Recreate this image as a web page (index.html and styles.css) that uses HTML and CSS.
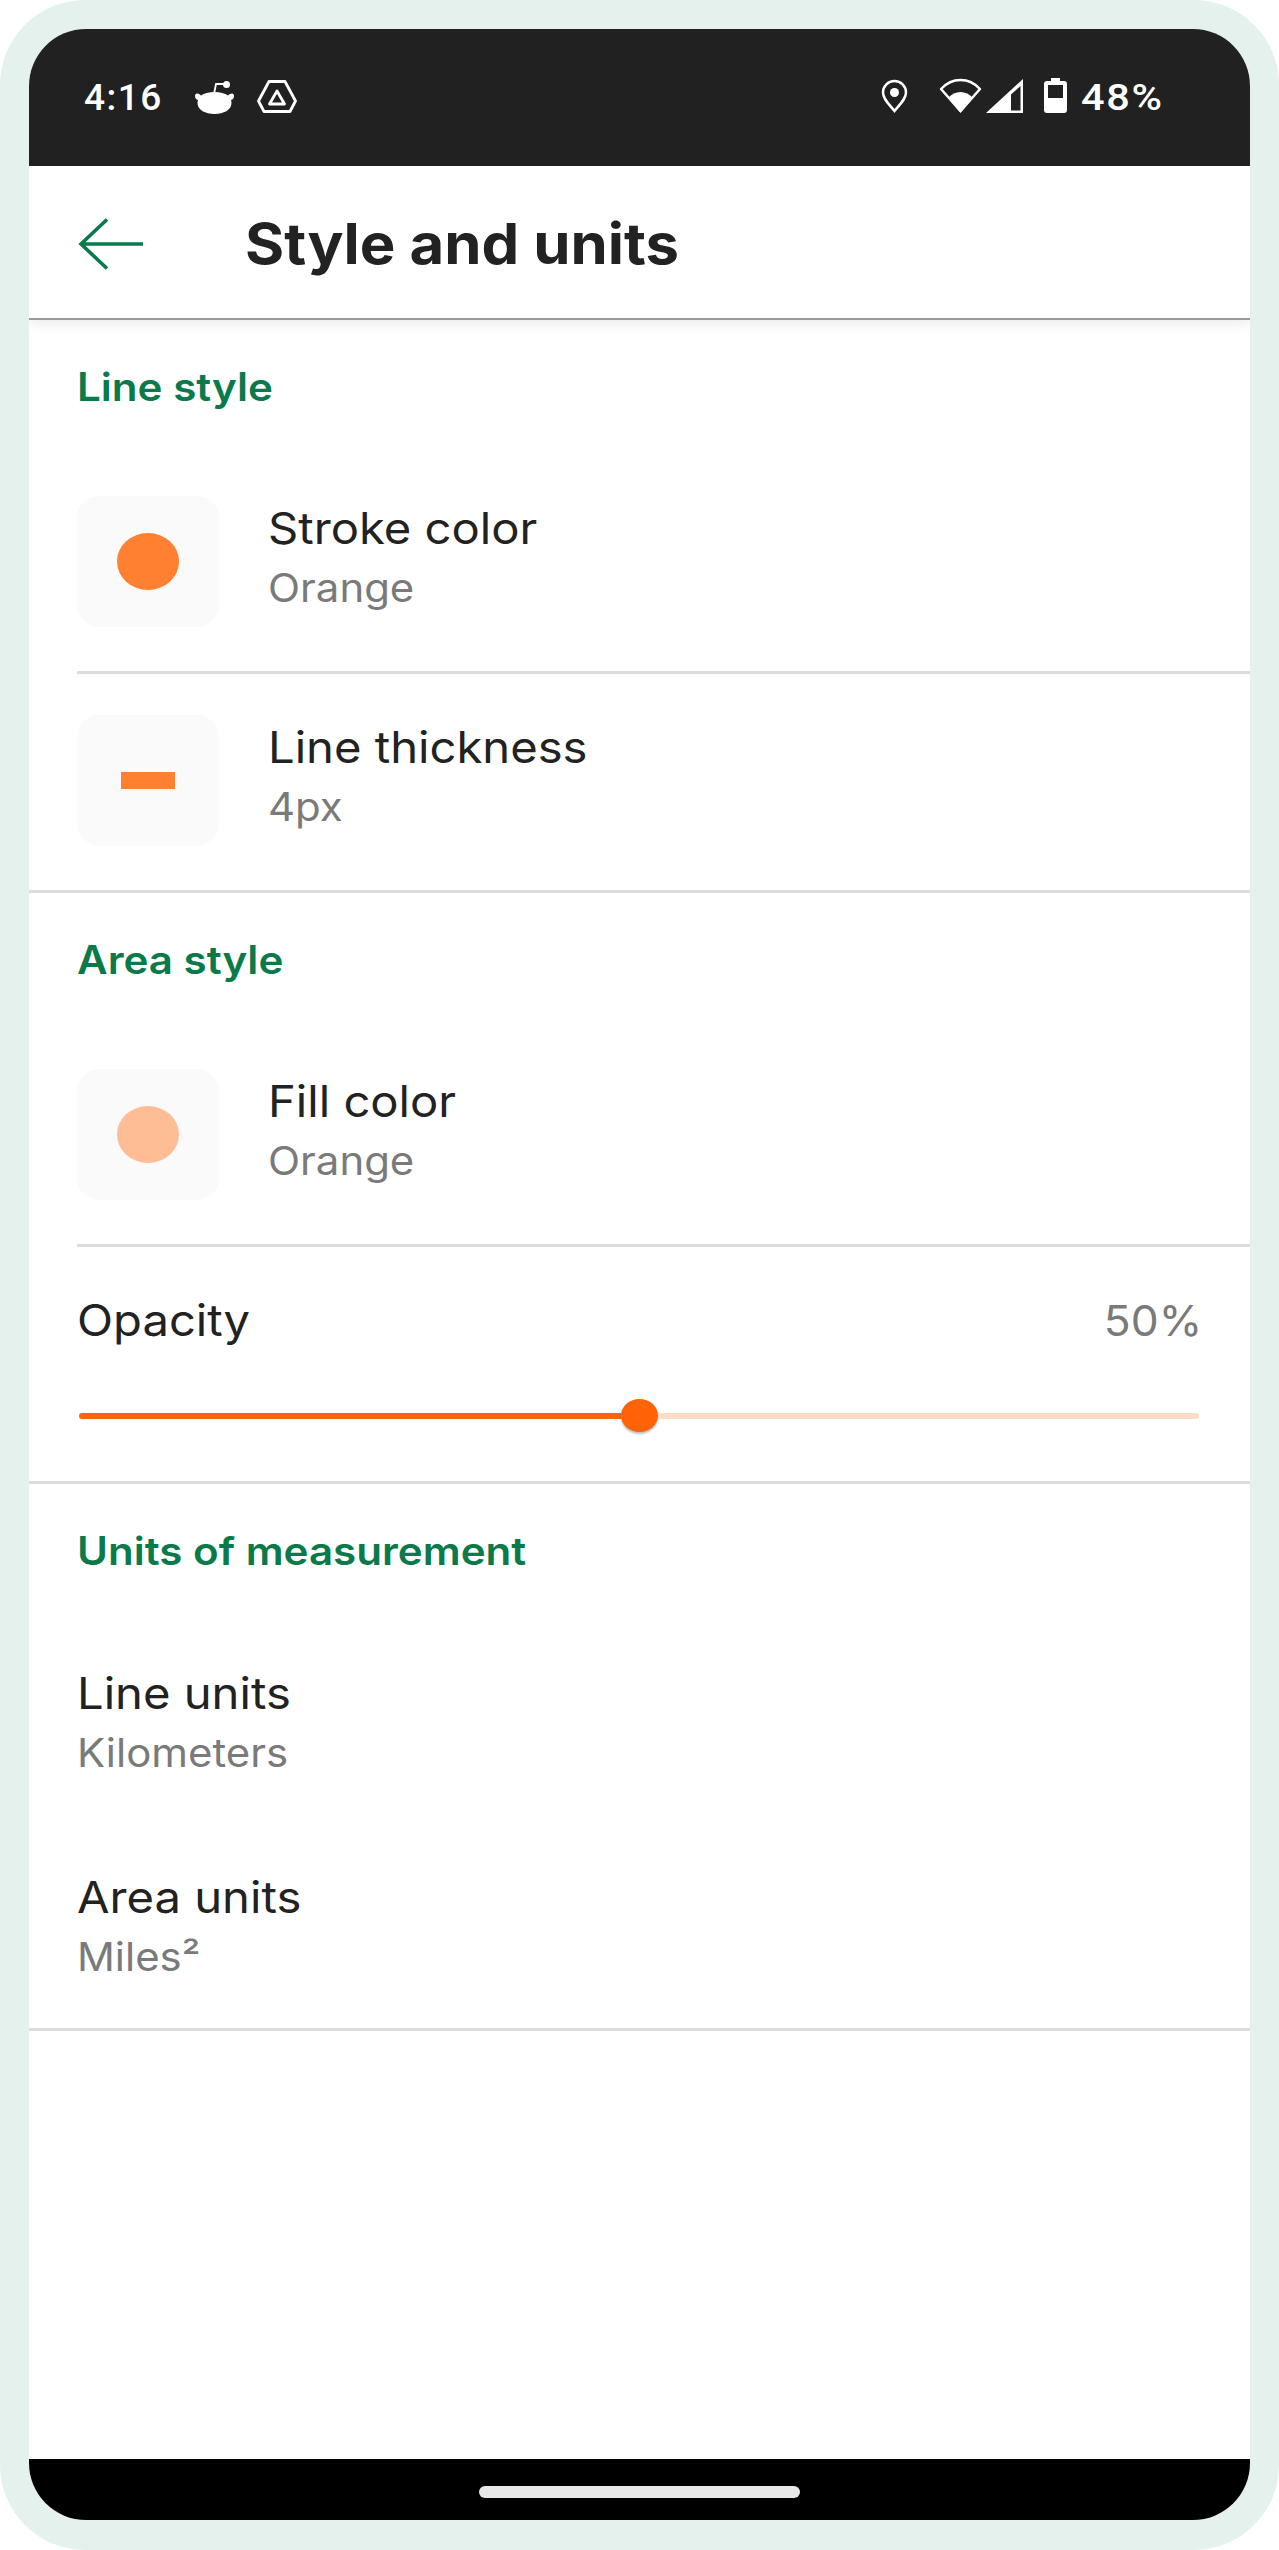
FILE: index.html
```html
<!DOCTYPE html>
<html lang="en">
<head>
<meta charset="utf-8">
<title>Style and units</title>
<link rel="stylesheet" href="styles.css">
</head>
<body>
<div class="frame">
  <div class="screen">
    <div class="status">
      <div class="status-left">
        <span class="clock">4:16</span>
        <svg class="ic-reddit" viewBox="0 0 39 33" width="39" height="33"><path d="M2 12.500c1.500 0 3 .8 4 2C9 12.500 14 11 19.500 11s10.500 1.500 13.500 3.500c1-1.200 2.500-2 4-2 1.200 0 2 1 2 2.500 0 2-1 3.500-3 4 .3 1 .5 2 .5 3C36.500 29 28.500 33 19.500 33S2.500 29 2.500 22c0-1 .2-2 .5-3-2-.5-3-2-3-4 0-1.500.8-2.500 2-2.500z" fill="#fff"/><circle cx="31.500" cy="3.500" r="3.500" fill="#fff"/><path d="M19 13l2-10h9" fill="none" stroke="#fff" stroke-width="1.800"/></svg>
        <svg class="ic-hex" viewBox="0 0 40 33" width="40" height="33"><path d="M12 1.500h16L38.500 21 33 31.500H7L1.500 21z" fill="none" stroke="#fff" stroke-width="2.800" stroke-linejoin="round"/><path d="M20 11L27.500 24H12.500z" fill="none" stroke="#fff" stroke-width="2.800" stroke-linejoin="round"/></svg>
      </div>
      <div class="status-right">
        <svg class="ic-pin" viewBox="0 0 27 34" width="27" height="34"><path d="M13.500 32C8 25 2 20 2 13.500a11.500 11.500 0 0 1 23 0C25 20 19 25 13.500 32z" fill="none" stroke="#fff" stroke-width="2.500"/><circle cx="13.500" cy="13.500" r="4.500" fill="#fff"/></svg>
        <svg class="ic-wifi" viewBox="0 0 43 35" width="43" height="35"><path d="M21.500 33L2 11C13 -1 30 -1 41 11z" fill="none" stroke="#fff" stroke-width="2.500" stroke-linejoin="round"/><path d="M21.500 35L9 20C16 12 27 12 34 20z" fill="#fff"/></svg>
        <svg class="ic-signal" viewBox="0 0 37 34" width="37" height="34"><path d="M0 34L37 0V34z" fill="#fff"/><path d="M25 15.500L34.500 7V31.500H25z" fill="#212121"/></svg>
        <svg class="ic-batt" viewBox="0 0 23 35" width="23" height="35"><path d="M7 0h9v3h4a3 3 0 0 1 3 3v26a3 3 0 0 1-3 3H3a3 3 0 0 1-3-3V6a3 3 0 0 1 3-3h4z" fill="#fff"/><rect x="4" y="7" width="15" height="13" fill="#212121"/></svg>
        <span class="percent">48%</span>
      </div>
    </div>

    <header class="appbar">
      <svg class="ic-back" viewBox="0 0 66 52" width="66" height="52"><path d="M65 26H4M29 1.500L3 26l26 24.500" fill="none" stroke="#0b7a4b" stroke-width="3.600"/></svg>
      <h1 class="title">Style and units</h1>
    </header>

    <main class="content">
      <section class="group">
        <h2 class="heading">Line style</h2>
        <div class="row row-inset">
          <div class="swatch"><span class="dot dot-stroke"></span></div>
          <div class="labels"><div class="label">Stroke color</div><div class="sub">Orange</div></div>
        </div>
        <div class="row">
          <div class="swatch"><span class="bar"></span></div>
          <div class="labels"><div class="label">Line thickness</div><div class="sub">4px</div></div>
        </div>
      </section>

      <section class="group">
        <h2 class="heading">Area style</h2>
        <div class="row row-inset">
          <div class="swatch"><span class="dot dot-fill"></span></div>
          <div class="labels"><div class="label">Fill color</div><div class="sub">Orange</div></div>
        </div>
        <div class="opacity">
          <div class="opacity-head"><span class="label">Opacity</span><span class="value">50%</span></div>
          <div class="slider">
            <div class="slider-fill"></div>
            <div class="slider-thumb"></div>
            <div class="slider-rest"></div>
          </div>
        </div>
      </section>

      <section class="group">
        <h2 class="heading">Units of measurement</h2>
        <div class="plain-row"><div class="label">Line units</div><div class="sub">Kilometers</div></div>
        <div class="plain-row"><div class="label">Area units</div><div class="sub">Miles²</div></div>
      </section>
    </main>

    <footer class="navbar"><span class="pill"></span></footer>
  </div>
</div>
</body>
</html>
```
FILE: styles.css
```css
* { box-sizing: border-box; }
html, body { margin: 0; padding: 0; background: #fff; }
body { font-family: Inter, "Liberation Sans", sans-serif; color: #222; }
.frame { width: 1279px; height: 2550px; padding: 29px 29px 30px; background: #e4f1ec; border-radius: 85px; }
.screen { height: 2491px; display: flex; flex-direction: column; background: #fff; border-radius: 57px; overflow: hidden; }

.status { height: 137px; flex: none; background: #212121; display: flex; justify-content: space-between; padding: 49px 95px 0 55px; color: #fff; }
.status-left, .status-right { display: flex; align-items: flex-start; }
.clock, .percent { font-family: Roboto, sans-serif; font-weight: 500; font-size: 37px; line-height: 36px; letter-spacing: 1.5px; margin-top: 2px; }
.percent { margin-left: 14px; transform: scaleX(1.12); transform-origin: left center; }
.ic-reddit { margin: 3px 0 0 32px; }
.ic-hex { margin: 2px 0 0 23px; }
.ic-pin { margin-top: 1px; }
.ic-wifi { margin-left: 31px; }
.ic-signal { margin: 1px 0 0 4px; }
.ic-batt { margin-left: 21px; }

.appbar { height: 154px; flex: none; display: flex; align-items: center; padding: 4px 0 0 49px; position: relative; border-bottom: 2px solid #9a9a9a; box-shadow: 0 4px 12px rgba(0,0,0,.08); z-index: 1; background: #fff; }
.title { margin: 0 0 0 101px; font-size: 56px; font-weight: 700; line-height: 1; color: #222; transform: scaleX(1.068); transform-origin: left center; }

.content { flex: 1; display: flex; flex-direction: column; }
.group { border-bottom: 3px solid #dcdcdc; }
.heading { margin: 0; height: 136px; padding: 44px 48px 0; font-size: 39px; line-height: 46px; font-weight: 600; color: #0b7a4b; transform: scaleX(1.08); transform-origin: 48px 0; }
.row { display: flex; padding: 41px 0 44px 48px; gap: 49px; }
.row-inset { position: relative; padding: 40px 0 47px 48px; }
.row-inset::after { content: ""; position: absolute; left: 48px; right: 0; bottom: 0; height: 3px; background: #dcdcdc; }
.swatch { width: 142px; height: 131px; flex: none; border-radius: 22px; background: #fafafa; display: flex; align-items: center; justify-content: center; }
.dot { width: 62px; height: 57px; border-radius: 50%; }
.dot-stroke { background: #ff8030; }
.dot-fill { background: #ffbd96; }
.bar { width: 54px; height: 17px; background: #ff8030; }
.labels { padding-top: 2px; }
.label { font-size: 44px; line-height: 60px; color: #222; transform: scaleX(1.072); transform-origin: left center; }
.sub { font-size: 39px; line-height: 59px; color: #7a7a7a; transform: scaleX(1.075); transform-origin: left center; }

.opacity { height: 234px; padding: 43px 48px 0; }
.opacity-head { display: flex; justify-content: space-between; align-items: baseline; }
.value { font-size: 42px; color: #7a7a7a; transform: scaleX(1.055); transform-origin: right center; }
.slider { margin-top: 49px; display: flex; align-items: center; height: 33px; padding: 0 3px 0 2px; }
.slider-fill { width: 542px; height: 6px; border-radius: 3px 0 0 3px; background: #ff6308; }
.slider-thumb { width: 37px; height: 33px; flex: none; border-radius: 50%; background: #ff6308; box-shadow: 0 2px 2px rgba(0,0,0,.25); }
.slider-rest { flex: 1; height: 6px; border-radius: 0 3px 3px 0; background: #ffdcc6; }

.plain-row { height: 204px; padding: 43px 48px 0; }

.navbar { height: 61px; flex: none; background: #000; display: flex; align-items: flex-start; justify-content: center; padding-top: 27px; }
.pill { width: 321px; height: 12px; border-radius: 6px; background: #e8e8e8; }
```
